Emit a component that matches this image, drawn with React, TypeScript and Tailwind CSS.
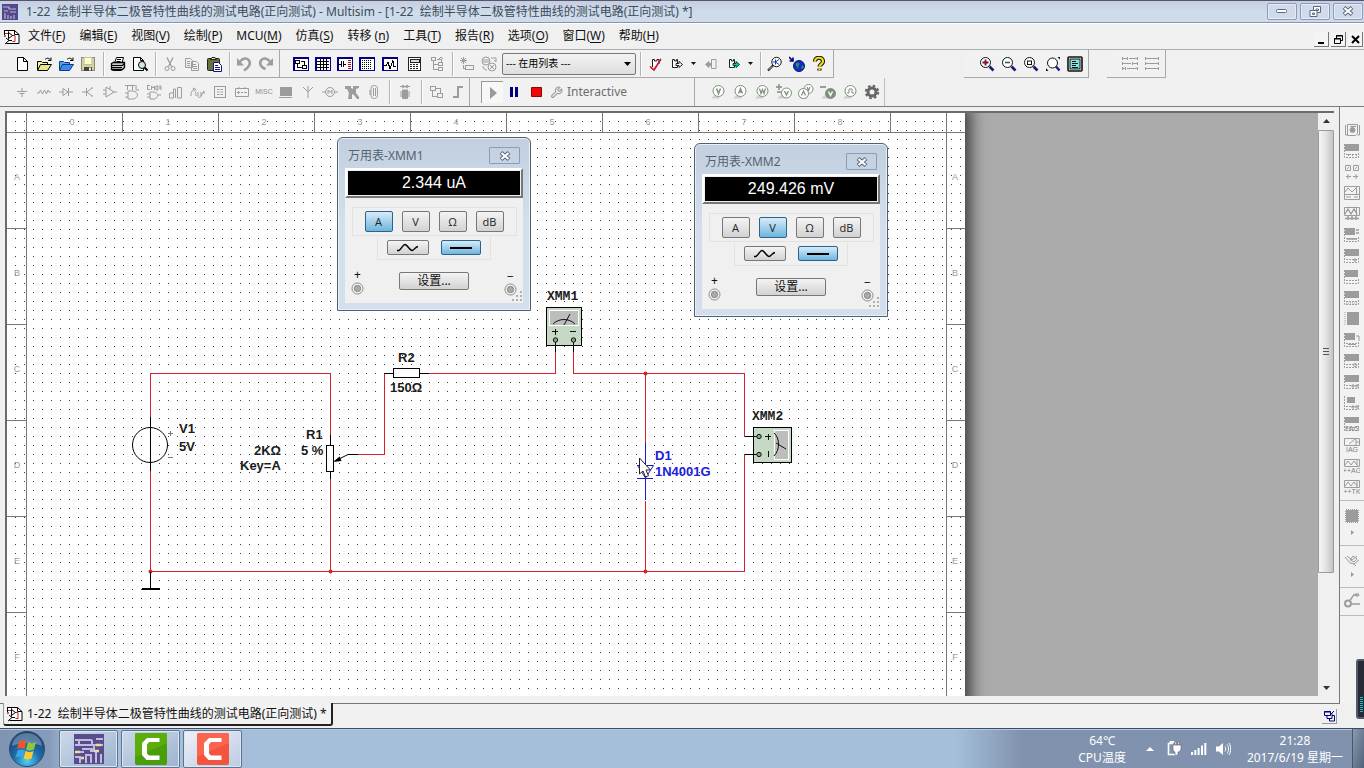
import type { ReactNode } from "react";
import { LuWrench } from "react-icons/lu";

const UI = "font-['Noto_Sans','Noto_Sans_CJK_SC',sans-serif]";

/* ---------- shared pieces ---------- */

function Glyph({ children, crisp = false }: { children: ReactNode; crisp?: boolean }) {
  return (
    <svg
      width="16"
      height="16"
      viewBox="0 0 16 16"
      fill="none"
      stroke="currentColor"
      strokeWidth="1"
      shapeRendering={crisp ? "crispEdges" : "auto"}
      aria-hidden="true"
      className="shrink-0"
    >
      {children}
    </svg>
  );
}

function Tool({ label, children, wide = false, color = "text-black" }: { label: string; children: ReactNode; wide?: boolean; color?: string }) {
  return (
    <button type="button" aria-label={label} className={`flex h-[22px] shrink-0 items-center justify-center ${wide ? "w-6" : "w-[22px]"} ${color}`}>
      {children}
    </button>
  );
}

function Sep() {
  return <div className="mr-[3px] ml-1 h-[24px] w-px shrink-0 bg-[#b4b4b4] shadow-[1px_0_0_#fff]" />;
}

function DropArrow() {
  return (
    <button type="button" aria-label="更多" className="flex h-[22px] w-[11px] shrink-0 items-center justify-center">
      <svg width="5" height="3" viewBox="0 0 5 3" aria-hidden="true"><path d="M0 0h5L2.500 3z" fill="#111" /></svg>
    </button>
  );
}

function DocIcon() {
  return (
    <Glyph>
      <path d="M.500 1.500h10l4.500 4v9H2.500M.500 1v5" stroke="#000" fill="#fff" />
      <path d="M10.500 1.500v4H15" stroke="#000" />
      <path d="M1 4.500h3.500M4.500 2v9M8 6.500h3v6H8.500" stroke="#c81e1e" />
      <path d="M4.500 3.500l4 3-4 3zM2 9l3 2.500L2 14M5 11.500h3M1 6v2M1 15l1.500-1" stroke="#000" />
    </Glyph>
  );
}

/* ---------- toolbar glyphs ---------- */

const mag = (inner: ReactNode) => (
  <Glyph>
    <circle cx="6.500" cy="6.500" r="5" stroke="#111" fill="#fff" />
    <path d="M10.500 10.500l4 4" stroke="#1a1a7a" strokeWidth="2.600" />
    {inner}
  </Glyph>
);

const navy = (inner: ReactNode) => (
  <Glyph crisp>
    <rect x="1" y="2" width="14" height="12" fill="#fff" stroke="#000080" strokeWidth="1" />
    <path d="M0 1h16M0 1v14M15.500 1v14M0 14.500h16" stroke="#000080" />
    {inner}
  </Glyph>
);

const standard = {
  newFile: <Glyph><path d="M3.500 1.500h6l4 4v9h-10zM9.500 1.500v4h4" stroke="#000" fill="#fff" /></Glyph>,
  open: (
    <Glyph>
      <path d="M1.500 14V5.500h4l1 1h5v2" fill="#f5f3a0" stroke="#000" />
      <path d="M1.500 14.500l3-6h11l-4 6z" fill="#e9e58a" stroke="#000" />
      <path d="M9 3.500c2-2 4-1.500 5.500.5M15 1.500v3h-3" stroke="#000" />
    </Glyph>
  ),
  openSample: (
    <Glyph>
      <path d="M1.500 14V5.500h4l1 1h5v2" fill="#5aa0f0" stroke="#123c80" />
      <path d="M1.500 14.500l3-6h11l-4 6z" fill="#3a8cf0" stroke="#123c80" />
      <path d="M9 3.500c2-2 4-1.500 5.500.5M15 1.500v3h-3" stroke="#000" />
    </Glyph>
  ),
  save: (
    <Glyph>
      <rect x="1.500" y="1.500" width="13" height="13" fill="#d8d48c" stroke="#888" />
      <rect x="4" y="1.500" width="8" height="7" fill="#fdfdc8" stroke="#bbb" />
      <path d="M4 11h8v4H4z" fill="#444" stroke="none" />
      <path d="M9 11.500h2v3H9z" fill="#eee" stroke="none" />
    </Glyph>
  ),
  print: (
    <Glyph>
      <path d="M4.500 7l2-5.500h7L12 7" fill="#fff" stroke="#000" />
      <path d="M7 3.500h4M6.500 5.500h4" stroke="#000" />
      <path d="M1.500 7.500l2-1h11v5l-2 2h-11z" fill="#c8c8c8" stroke="#000" strokeWidth="1.300" />
      <path d="M1.500 9.500h11l2-2M2 11.500h10M3 13.500v1h8v-1" stroke="#000" strokeWidth="1.200" />
    </Glyph>
  ),
  preview: (
    <Glyph>
      <path d="M1.500 1.500h7l3 3v10h-10zM8.500 1.500v3h3" fill="#fff" stroke="#000" />
      <circle cx="10" cy="9" r="3.500" fill="#cfe6ea" stroke="#000" />
      <path d="M12.500 11.500l3 3" stroke="#000" strokeWidth="2" />
    </Glyph>
  ),
  cut: (
    <Glyph>
      <path d="M5 1.500l4.500 9M11 1.500l-4.500 9" strokeWidth="1.300" />
      <circle cx="5" cy="12.500" r="2" /><circle cx="11" cy="12.500" r="2" />
    </Glyph>
  ),
  copy: (
    <Glyph>
      <path d="M1.500 2.500h5l2 2v7h-7zM7.500 5.500h5l2 2v7h-7z" fill="#f0f0f0" />
      <path d="M3 5.500h3M3 7.500h3M3 9.500h3M9 8.500h3M9 10.500h4M9 12.500h4" />
    </Glyph>
  ),
  paste: (
    <Glyph>
      <rect x="1.500" y="2.500" width="12" height="12" rx="1" fill="#6b7040" stroke="#222" />
      <path d="M4.500 3.500l1.500-2h3l1.500 2z" fill="#e9e58a" stroke="#222" />
      <path d="M7.500 6.500h5l3 3v6h-8z" fill="#fff" stroke="#16167a" />
      <path d="M9 9.500h3M9 11.500h5M9 13.500h5" stroke="#16167a" />
    </Glyph>
  ),
  undo: (
    <Glyph>
      <path d="M4 5.500C7 2 11 1.500 13 4.500c2 3 0 7-5 10" strokeWidth="2.600" />
      <path d="M1 2v7.500h7z" fill="currentColor" stroke="none" />
    </Glyph>
  ),
  redo: (
    <Glyph>
      <path d="M12 5.500C9 2 5 1.500 3 4.500c-2 3 0 7 4.500 8.500" strokeWidth="2.600" />
      <path d="M15 2v7.500H8z" fill="currentColor" stroke="none" />
    </Glyph>
  ),
};

const views = {
  hierarchy: navy(<path d="M2.500 4.500h4v3h-4zM9.500 9.500h4v3h-4zM4.500 8v3.500h5M8 5.500h3v3" stroke="#000" />),
  sheet: navy(<path d="M2 5.500h12M2 8.500h12M2 11.500h12M5.500 3v11M8.500 3v11M11.500 3v11" stroke="#000" />),
  database: navy(
    <>
      <path d="M2 8.500h2M4.500 5v6M6.500 5v6M7 8.500h2" stroke="#000" />
      <path d="M11 4.500h3M11 6.500h3M11 8.500h3M11 10.500h3M11 12.500h3" stroke="#c00020" />
    </>,
  ),
  breadboard: navy(<path d="M3 4.500h10M3 6.500h10M3 8.500h10M3 10.500h10M3 12.500h10" stroke="#000" strokeDasharray="1 1" />),
  grapher: navy(<path d="M2 9.500h2l2-3 2 6 3-8v6h3" stroke="#000" />),
  post: (
    <Glyph crisp>
      <path d="M2.500 1.500h12v13h-12z" fill="#fff" stroke="#222" />
      <path d="M4 3h9v3H4z" stroke="#222" fill="#ddd" />
      <path d="M4 8.500h9M4 10.500h9M4 12.500h9" stroke="#222" strokeDasharray="2 1" />
    </Glyph>
  ),
  parent: <Glyph crisp><path d="M2.500 1.500h4v3h-4zM9.500 6.500h4v3h-4zM9.500 11.500h4v3h-4zM4.500 5v8.500h5M5 8.500h4M8 3.500h4v3M10 3l2-2 2 2" /></Glyph>,
  create: <Glyph crisp><path d="M4.500 1v7M1 4.500h7M2 2l5 5M7 2L2 7M6.500 9.500h8v4h-8zM4.500 9v3h2" /></Glyph>,
  wizard: (
    <Glyph>
      <circle cx="5" cy="5" r="4" /><path d="M2 4h6M2 6h6M10 2h5v4M13 4l2 2" />
      <circle cx="11" cy="11" r="4" fill="#f0f0f0" /><path d="M9 9l4 4M13 9l-4 4M2 10c0 3 2 4 4 4" />
    </Glyph>
  ),
};

const transfer = {
  erc: (
    <Glyph>
      <path d="M5.500 11V3.500h2v1.500h2.500V3.500h2V8" stroke="#222" fill="#fff" />
      <path d="M3 10.500l4 3.500 7-11" stroke="#c81432" strokeWidth="1.600" />
    </Glyph>
  ),
  forward: (
    <Glyph>
      <path d="M3.500 3.500h2v1.500h2V3.500h1v8h-5z" stroke="#222" fill="#fff" />
      <path d="M7 7.500h3V5.500l3.500 3-3.500 3v-2H7z" stroke="#222" fill="#fff" />
    </Glyph>
  ),
  back: (
    <Glyph>
      <path d="M8.500 3.500h4.500v9H8.500z" />
      <path d="M9 7.500H6V5.500L2.500 8.500l3.500 3v-2h3" fill="currentColor" />
    </Glyph>
  ),
  forwardGreen: (
    <Glyph>
      <path d="M3.500 3.500h2v1.500h2V3.500h1v8h-5z" stroke="#222" fill="#fff" />
      <path d="M7 7.500h3V5.500l3.500 3-3.500 3v-2H7z" stroke="#044" fill="#0ca" />
    </Glyph>
  ),
  find: (
    <Glyph>
      <circle cx="9.500" cy="6" r="4.700" fill="#fff" stroke="#111" />
      <path d="M6 9.500L1 14.500" stroke="#111" strokeWidth="2.200" />
      <path d="M5.300 10.200L1.700 13.800" stroke="#fff" strokeWidth=".8" />
      <path d="M8.500 3.500v5M8.500 6l3.500-2.500M8.500 6l3.500 2.500M6 6h2" stroke="#1a3ab0" />
    </Glyph>
  ),
  web: (
    <Glyph>
      <circle cx="10" cy="10" r="5.500" fill="#1428c8" stroke="#0a1480" />
      <path d="M6.500 8c2-2 4-1 4 0s-2 2-1 4-2 0-3-4zM12 11l2-2 1 2-2 2z" fill="#1d9a4a" stroke="none" />
      <path d="M0 1l4 4M4 1.500V5H.5" stroke="#000080" strokeWidth="1.600" />
    </Glyph>
  ),
  help: (
    <Glyph>
      <path d="M4 5.500c0-5 8-5 8 0 0 2.500-3.500 3-3.500 5M8.500 12.500v2" stroke="#111" strokeWidth="4.200" />
      <path d="M4 5.500c0-5 8-5 8 0 0 2.500-3.500 3-3.500 5M8.500 12.500v1.800" stroke="#f5e000" strokeWidth="2.200" />
    </Glyph>
  ),
};

const zooms = {
  in: mag(<path d="M3.500 6.500h6M6.500 3.500v6" stroke="#7a1030" strokeWidth="1.800" />),
  out: mag(<path d="M4 6.500h5" stroke="#2a6a4a" strokeWidth="1.600" />),
  area: mag(<rect x="4.500" y="5" width="4" height="3.500" stroke="#111" />),
  fit: (
    <Glyph>
      <circle cx="7.500" cy="7" r="5" fill="#fff" stroke="#111" />
      <path d="M11 10.500l3.500 4" stroke="#1a1a7a" strokeWidth="2.400" />
      <path d="M12.500 1H15v2.500zM1 12v3h2.500z" fill="#111" stroke="none" />
    </Glyph>
  ),
  full: (
    <Glyph>
      <rect x="1" y="1" width="14" height="14" rx="1" fill="#fff" stroke="#111" strokeWidth="1.600" />
      <rect x="3" y="3" width="10" height="10" fill="#7fe6e6" stroke="#111" />
      <path d="M5 5.500h4M5 7.500h6M5 9.500h4M5 11.500h6" stroke="#111" />
    </Glyph>
  ),
};

const parts: [string, ReactNode][] = [
  ["电源", <path d="M8 4v3.500M3 7.500h10M5.500 9.500h5M8 10v3" />],
  ["基本", <path d="M1 9h2l1.500-3 2 4 2-4 2 4 1.500-4 1 2h2" />],
  ["二极管", <path d="M1 8h4M5 4.500v7L10 8zM10.500 4v8M11 8h4" />],
  ["晶体管", <path d="M2 8h4M6.500 4v8M7 8l5-4M7 8l5 4M12 3v2M12 11v2" />],
  ["模拟", <path d="M4 3v10l8-5zM1 6h3M1 10h3M12 8h3M8 2v3" />],
  ["TTL", <path d="M1 1.500h5M3.500 2v4M6 1.500h5M8.500 2v4M12 1v5h3M4 7h5c6 1 6 7 0 8H4zM1 9h3M1 13h3" />],
  ["CMOS", <path d="M1 1.500h3M1.500 2v3.500H4M5.500 6V2l1.500 2 1.500-2v4M10 2h2v4h-2zM13 2h2v2h-2M15 4v2M4 8h4c5 1 5 6 0 7H4zM1 10h3M1 13h3M12 11h3" />],
  ["数字", <path d="M1.500 9v5h4V5M5.500 5h2v9M9.500 14V3.500h4V14h-4M5 9H2" />],
  ["混合", <path d="M1 12c0-8 5-8 5 0M3.500 6V4l3 2M8 8v4c0 2 3 2 3 0V8M11 12l3-5v3" />],
  ["指示器", <><rect x="2.500" y="2.500" width="11" height="11" /><path d="M5 5.500h6M5 8h6M5 10.500h6" strokeDasharray="2.500 1" /></>],
  ["功率", <path d="M1.500 4.500h13v8h-13zM3 8.500h3M10 8.500h3M4.500 7v3M5 3v2M11 3v2M7 8.500h2" />],
];

const parts2: [string, ReactNode][] = [
  ["高级外设", <><rect x="2" y="3" width="12" height="9" fill="currentColor" stroke="none" /><path d="M1 13.500h13M3 10l2-3M8 10h4" /></>],
  ["射频", <path d="M3 3l5 5 5-5M8 2v12" />],
  ["机电", <><circle cx="8" cy="8" r="4.500" /><path d="M0 8h3.500M12.500 8H16M6 10V6l2 2.500L10 6v4" /></>],
  ["NI", <path d="M1 2h6v2l2 1V2h6v2l-3 1v4l3 4v2h-2l-3-4-2-1v5H4l1-6-2-4H1z" fill="currentColor" stroke="none" />],
  ["连接器", <><rect x="5" y="1.500" width="6.500" height="13" rx="3" /><path d="M7.500 4v8M9.500 4v8M4 6v5" /></>],
];

const probes: [string, ReactNode][] = [
  ["电压", <><circle cx="8.500" cy="7" r="5.500" fill="#fff" /><path d="M6.500 4.500l2 5 2-5" strokeWidth="1.500" /></>],
  ["电流", <><circle cx="8.500" cy="7" r="5.500" fill="#fff" /><path d="M6.500 9.500l2-5 2 5M7.500 8h2" strokeWidth="1.300" /></>],
  ["功率", <><circle cx="8.500" cy="7" r="5.500" fill="#fff" /><path d="M5.500 4.500l1.500 5 1.500-4 1.500 4 1.500-5" strokeWidth="1.200" /></>],
  ["差分电压", <><circle cx="10.500" cy="9" r="5" fill="#fff" /><path d="M8.500 7l2 4 2-4M0 3h6M3 0v6M1 8h4" strokeWidth="1.400" /></>],
  ["电压电流", <><circle cx="10.500" cy="5" r="4.500" fill="#fff" /><circle cx="5.500" cy="9.500" r="5" fill="#fff" /><path d="M3.500 11.500l2-4.500 2 4.500M9 3l1.500 3.500L12 3" strokeWidth="1.200" /></>],
  ["参考电压", <><circle cx="10.500" cy="9.500" r="5" fill="currentColor" /><path d="M8.500 7.500l2 4 2-4" stroke="#fff" strokeWidth="1.400" /><path d="M0 3h6" strokeWidth="1.600" /></>],
  ["数字", <><circle cx="8.500" cy="7" r="5.500" fill="#fff" /><path d="M5 9h2V5h3v4h2" /></>],
];

/* ---------- header ---------- */

function TitleBar() {
  const btn = "flex h-[17px] w-[30px] items-center justify-center rounded-[2px] border border-[#8d9bb8] bg-[#cfdaea] shadow-[inset_0_0_0_1px_#e4ebf5] text-[#5a6a80]";
  return (
    <header className="flex h-[24px] shrink-0 items-center border-t border-b border-t-[#55566c] border-b-white bg-gradient-to-b from-[#c6cee2] via-[#cddde9] to-[#cfdaee] pr-px pl-[2px] shadow-[inset_0_-1px_0_#8797a8]">
      <svg width="16" height="16" viewBox="0 0 16 16" aria-hidden="true">
        <rect width="16" height="16" fill="#544888" />
        <path d="M1 3h6v2h7M2 7h4M8 8h6M3 15V9M6 15v-4M9 15v-3M12 15v-4" stroke="#b9b4dc" strokeWidth="1.200" fill="none" />
      </svg>
      <h1 className="ml-2 flex-1 truncate text-[12px] whitespace-pre text-[#3f4a5a]">
        {"1-22  绘制半导体二极管特性曲线的测试电路(正向测试) - Multisim - [1-22  绘制半导体二极管特性曲线的测试电路(正向测试) *]"}
      </h1>
      <div className="flex gap-[3px] pb-[2px]">
        <button type="button" aria-label="最小化" className={btn}><svg width="12" height="6" viewBox="0 0 12 6" aria-hidden="true"><rect x=".5" y="1.500" width="10" height="3" rx="1" fill="#fff" stroke="#5a6a80" /></svg></button>
        <button type="button" aria-label="还原" className={btn}><svg width="13" height="11" viewBox="0 0 13 11" aria-hidden="true"><path d="M4.500.5h7v6h-7zM7 3h2.500v1.500H7z" fill="#fff" stroke="#5a6a80" /><path d="M1 4.500h7v6H1zM3.500 7h2v1.500h-2z" fill="#fff" stroke="#5a6a80" /></svg></button>
        <button type="button" aria-label="关闭" className={btn}><CloseX /></button>
      </div>
    </header>
  );
}

function CloseX() {
  return (
    <svg width="12" height="10" viewBox="0 0 12 10" aria-hidden="true">
      <path d="M2 1.500l8 7M10 1.500l-8 7" stroke="#55657c" strokeWidth="4" />
      <path d="M2.500 2l7 6M9.500 2l-7 6" stroke="#fff" strokeWidth="2.200" />
    </svg>
  );
}

const menus: [string, string, string][] = [
  ["文件(", "F", ")"], ["编辑(", "E", ")"], ["视图(", "V", ")"], ["绘制(", "P", ")"], ["MCU(", "M", ")"], ["仿真(", "S", ")"],
  ["转移 (", "n", ")"], ["工具(", "T", ")"], ["报告(", "R", ")"], ["选项(", "O", ")"], ["窗口(", "W", ")"], ["帮助(", "H", ")"],
];

function MenuBar() {
  const mdi = "flex h-[15px] w-[15px] items-center justify-center border-r border-b border-[#777] bg-[#f4f4f4]";
  return (
    <nav className="flex h-[26px] shrink-0 items-center border-b border-[#a8adb8] bg-[#f0f0f0] pr-px pl-1">
      <DocIcon />
      <div className="ml-[2px] flex flex-1 gap-[2px] pb-px">
        {menus.map(([a, k, b]) => (
          <button key={a} type="button" className="px-[6px] text-[12px] whitespace-pre text-[#111]">
            {a}<span className="underline underline-offset-2">{k}</span>{b}
          </button>
        ))}
      </div>
      <div className="flex gap-[2px] self-end pb-[2px]">
        <button type="button" aria-label="最小化文档" className={mdi}><svg width="9" height="9" aria-hidden="true"><path d="M1 8h6" stroke="#000" strokeWidth="2" /></svg></button>
        <button type="button" aria-label="还原文档" className={mdi}><svg width="9" height="9" aria-hidden="true"><path d="M2.500 3V.5h6v5H6M2 1h7M.5 3.500h6v5h-6zM0 4h7" stroke="#000" fill="none" /></svg></button>
        <button type="button" aria-label="关闭文档" className={mdi}><svg width="9" height="9" aria-hidden="true"><path d="M1 1l7 7M8 1L1 8" stroke="#000" strokeWidth="2" /></svg></button>
      </div>
    </nav>
  );
}

const bar = "flex h-[28px] shrink-0 items-center border-r border-b border-[#a9a9a9] bg-[#f1f1f1]";
const gray = "text-[#9c9c9c]";

function ToolRowOne() {
  return (
    <div className="flex h-[28px] shrink-0 bg-[#f0f0f0]">
      <div className={`${bar} w-[280px] pl-[11px]`} role="toolbar" aria-label="标准">
        <Tool label="新建">{standard.newFile}</Tool>
        <Tool label="打开">{standard.open}</Tool>
        <Tool label="打开样本">{standard.openSample}</Tool>
        <Tool label="保存">{standard.save}</Tool>
        <Sep />
        <Tool label="打印">{standard.print}</Tool>
        <Tool label="打印预览">{standard.preview}</Tool>
        <Sep />
        <Tool label="剪切" color={gray}>{standard.cut}</Tool>
        <Tool label="复制" color={gray}>{standard.copy}</Tool>
        <Tool label="粘贴">{standard.paste}</Tool>
        <Sep />
        <Tool label="撤消" color={gray}>{standard.undo}</Tool>
        <Tool label="重做" color={gray}>{standard.redo}</Tool>
      </div>
      <div className={`${bar} w-[554px] pl-[10px]`} role="toolbar" aria-label="主要">
        <Tool label="设计工具箱">{views.hierarchy}</Tool>
        <Tool label="电子表格视图">{views.sheet}</Tool>
        <Tool label="数据库管理器">{views.database}</Tool>
        <Tool label="面包板">{views.breadboard}</Tool>
        <Tool label="图示仪" wide>{views.grapher}</Tool>
        <Tool label="后处理器" wide>{views.post}</Tool>
        <Tool label="母电路图" color={gray}>{views.parent}</Tool>
        <Sep />
        <Tool label="元器件向导" color={gray}>{views.create}</Tool>
        <Tool label="创建元器件" color={gray}>{views.wizard}</Tool>
        <select aria-label="在用列表" className="ml-[2px] h-[22px] w-[134px] appearance-none rounded-[2px] border border-[#777] bg-[#ececec] bg-[linear-gradient(#f3f3f3,#dedede)] px-[3px] font-['Open_Sans','Noto_Sans_CJK_SC',sans-serif] text-[10px] text-black">
          <option>--- 在用列表 ---</option>
        </select>
        <svg width="7" height="4" viewBox="0 0 7 4" className="pointer-events-none -ml-3 mr-[5px] shrink-0" aria-hidden="true"><path d="M0 0h7L3.500 4z" fill="#000" /></svg>
        <Sep />
        <Tool label="电气规则查验">{transfer.erc}</Tool>
        <Tool label="转移到布局">{transfer.forward}</Tool>
        <DropArrow />
        <Tool label="反向注解" wide color={gray}>{transfer.back}</Tool>
        <Tool label="正向注解">{transfer.forwardGreen}</Tool>
        <DropArrow />
        <Sep />
        <Tool label="查找范例">{transfer.find}</Tool>
        <Tool label="教育网站">{transfer.web}</Tool>
        <Tool label="帮助">{transfer.help}</Tool>
      </div>
      <div className={`${bar} ml-[130px] w-[125px] pl-3`} role="toolbar" aria-label="缩放">
        <Tool label="放大">{zooms.in}</Tool>
        <Tool label="缩小">{zooms.out}</Tool>
        <Tool label="缩放区域">{zooms.area}</Tool>
        <Tool label="缩放页面">{zooms.fit}</Tool>
        <Tool label="全屏">{zooms.full}</Tool>
      </div>
      <div className={`${bar} ml-[18px] w-[59px] pl-3`} role="toolbar" aria-label="梯形图">
        <Tool label="梯级" color={gray}><Glyph crisp><path d="M.500 1v3M.500 6v3M.500 11v3M15.500 1v3M15.500 6v3M15.500 11v3M0 2.500h5M7 2.500h9M0 7.500h9M11 7.500h5M0 12.500h3M5 12.500h11M5.500 1v3M10.500 6v3M3.500 11v3" /></Glyph></Tool>
        <Tool label="横档" color={gray}><Glyph crisp><path d="M1 2.500h14M1 7.500h14M1 12.500h14M1.500 1v3M1.500 6v3M1.500 11v3M14.500 1v3M14.500 6v3M14.500 11v3" /></Glyph></Tool>
      </div>
    </div>
  );
}

function ToolRowTwo() {
  return (
    <div className="flex h-[28px] shrink-0 bg-[#f0f0f0]">
      <div className="flex w-[470px] shrink-0 items-center border-r border-[#a9a9a9] bg-[#f1f1f1] pl-[11px]" role="toolbar" aria-label="元器件">
        {parts.map(([n, g]) => <Tool key={n} label={n} color={gray}><Glyph>{g}</Glyph></Tool>)}
        <button type="button" className="w-[22px] font-['Liberation_Sans',sans-serif] text-[7px] text-[#8a8a8a]">MISC</button>
        {parts2.map(([n, g]) => <Tool key={n} label={n} color={gray}><Glyph>{g}</Glyph></Tool>)}
        <Sep />
        <Tool label="MCU" wide color={gray}><Glyph><path d="M3 2.500h10M5 1l6 3M11 1L5 4" /><path d="M5.500 6h5v8.500h-5zM3 8h2M3 10h2M3 12h2M11 8h2M11 10h2M11 12h2" fill="currentColor" /></Glyph></Tool>
        <Sep />
        <Tool label="层次块" color={gray}><Glyph crisp><path d="M2.500 2.500h5v4h-5zM9.500 9.500h5v4h-5zM4.500 7v5h5M8 4.500h4v4" /></Glyph></Tool>
        <Tool label="总线" color={gray}><Glyph crisp><path d="M3 13h5V3h5" strokeWidth="2" /></Glyph></Tool>
      </div>
      <div className="flex w-[225px] shrink-0 items-center border-r border-[#a9a9a9] bg-[#f1f1f1] pl-[11px]" role="toolbar" aria-label="仿真">
        <button type="button" aria-label="运行" className="flex h-[22px] w-[22px] items-center justify-center border-t border-l border-[#999] bg-[#f7f7f7]"><svg width="8" height="12" aria-hidden="true"><path d="M1 0l7 6-7 6z" fill="#9a9a9a" /></svg></button>
        <Tool label="暂停"><svg width="8" height="10" aria-hidden="true"><path d="M0 0h3v10H0zM5 0h3v10H5z" fill="#000080" /></svg></Tool>
        <Tool label="停止"><svg width="11" height="10" aria-hidden="true"><path d="M.5.5h10v9H.5z" fill="#f00808" stroke="#900" /></svg></Tool>
        <button type="button" className="ml-[3px] flex items-center gap-1 text-[12px] text-[#6d6d6d]"><LuWrench size={13} className="text-[#999]" />Interactive</button>
      </div>
      <div className="flex w-[190px] shrink-0 items-center border-r border-[#bdbdbd] bg-[#f1f1f1] pl-3" role="toolbar" aria-label="探针">
        {probes.map(([n, g]) => <Tool key={n} label={n} color="text-[#7f8f7c]"><Glyph><path d="M1 14.500h9l-3-3H4z" fill="#cfcfcf" stroke="none" />{g}</Glyph></Tool>)}
        <Tool label="探针设置" color="text-[#666]"><Glyph><circle cx="8" cy="8" r="4" strokeWidth="3" /><circle cx="8" cy="8" r="6.200" strokeWidth="2" strokeDasharray="2.600 2.270" /></Glyph></Tool>
      </div>
    </div>
  );
}

/* ---------- schematic ---------- */

const cols = ["0", "1", "2", "3", "4", "5", "6", "7", "8"];
const rows = ["A", "B", "C", "D", "E", "F"];

function Schematic() {
  return (
    <svg width="958" height="680" viewBox="7 113 958 680" className="block bg-white" role="img" aria-label="测试电路" fill="none">
      <defs>
        <pattern id="dots" x="6" y="4" width="9" height="9" patternUnits="userSpaceOnUse">
          <rect width="1" height="1" fill="#3a3a3a" />
        </pattern>
      </defs>
      <rect x="7" y="113" width="958" height="680" fill="url(#dots)" />
      <g shapeRendering="crispEdges" stroke="#777">
        <path d="M26.500 113v680M946.500 113v680M7 132.500h958" />
        {cols.map((c, i) => <path key={c} d={`M${122.500 + i * 96} 113v19`} />)}
        {rows.map((r, i) => <path key={r} d={`M7 ${228.500 + i * 96}h19M946 ${228.500 + i * 96}h19`} />)}
      </g>
      <g className="font-['Liberation_Sans',sans-serif] text-[9px]" fill="#999" textAnchor="middle">
        {cols.map((c, i) => <text key={c} x={72 + i * 96} y="125">{c}</text>)}
        {rows.map((r, i) => <text key={r} x="17" y={180 + i * 96}>{r}</text>)}
        {rows.map((r, i) => <text key={r} x="955" y={180 + i * 96}>{r}</text>)}
      </g>

      <g shapeRendering="crispEdges" stroke="#d8202a">
        <path d="M150.500 417V373.500H330.500V435M150.500 471V571.500H744.500V454.500M330.500 479V571M358 454.500H384.500V373.500M429 373.500H555.500V352M573.500 352V373.500H744.500V436.500" />
        <path d="M645.500 373.500V443.500" />
        <path d="M645.500 500.500V571.500" />
      </g>
      <g fill="#d8202a">
        <circle cx="150.500" cy="571.500" r="2" /><circle cx="330.500" cy="571.500" r="2" />
        <circle cx="645.500" cy="571.500" r="2" /><circle cx="645.500" cy="373.500" r="2" />
      </g>
      <g shapeRendering="crispEdges" stroke="#000">
        <path d="M150.500 417V471M150.500 572V588M330.500 435V445M330.500 471V479M384 373.500H393M419 373.500H429M348 454.500H358M555.500 346V352M573.500 346V352M745 436.500H757M745 454.500H757" />
        <path d="M326.500 445.500h7v26h-7zM393.500 368.500h26v9h-26z" fill="#fff" />
        <path d="M142 589h18" strokeWidth="2" />
      </g>
      <circle cx="150" cy="445" r="17.500" stroke="#000" />
      <path d="M348 454.500L339 459" stroke="#000" />
      <path d="M333 462l6.500-5.500 2 4.500z" fill="#000" />
      <path d="M168 433.500h5M170.500 431v5M168 457.500h5" stroke="#777" shapeRendering="crispEdges" />

      <g stroke="#1c1cc4">
        <path d="M645.500 443V500M637 478.500h16M637 465.500h16" shapeRendering="crispEdges" />
        <path d="M637.500 465.500h16l-8 12.500z" />
      </g>

      <g className="font-['Liberation_Sans',sans-serif] text-[13px] font-bold" fill="#1c1c1c">
        <text x="179" y="433">V1</text><text x="179" y="451">5V</text>
        <text x="398" y="362">R2</text><text x="390" y="392">150Ω</text>
        <text x="306" y="439">R1</text><text x="301" y="455">5 %</text>
        <text x="254" y="455">2KΩ</text><text x="240" y="470">Key=A</text>
        <text x="655" y="460" fill="#2020dc">D1</text><text x="655" y="476" fill="#2020dc">1N4001G</text>
      </g>
      <g className="font-['Liberation_Mono',monospace] text-[13px] font-bold" fill="#1c1c1c">
        <text x="547" y="300">XMM1</text><text x="752" y="420">XMM2</text>
      </g>

      <g shapeRendering="crispEdges">
        <rect x="546.500" y="307.500" width="35" height="38" fill="#c6d9c5" stroke="#000" />
        <rect x="549.500" y="310.500" width="29" height="15" fill="#bdbdbd" stroke="#fff" />
        <path d="M552 331.500h6M555.500 329v6M570 331.500h6M555.500 341v5M573.500 341v5" stroke="#111" />
        <rect x="753.500" y="427.500" width="38" height="35" fill="#c6d9c5" stroke="#000" />
        <rect x="774.500" y="430.500" width="14" height="29" fill="#bdbdbd" stroke="#fff" />
        <path d="M765 436.500h6M768.500 434v6M768.500 451v6M754 436.500h5M754 454.500h5" stroke="#111" />
      </g>
      <g stroke="#111">
        <path d="M553 324c6-6 16-6 22 0M564 325l6-11M774 433c6 5 6 17 0 23M776 443l10 6" />
        <g fill="#8ca08c">
          <circle cx="555.500" cy="340" r="2.200" /><circle cx="573.500" cy="340" r="2.200" />
          <circle cx="759" cy="436.500" r="2.200" /><circle cx="759" cy="454.500" r="2.200" />
        </g>
      </g>
      <path d="M639.500 458v16l3.500-3 2.500 6 3-1.200-2.500-5.800h4.500z" fill="#fff" stroke="#222" />
    </svg>
  );
}

function Terminal() {
  return (
    <svg width="13" height="13" viewBox="0 0 13 13" aria-hidden="true">
      <circle cx="6.500" cy="6.500" r="5.500" fill="#f6f6f6" stroke="#888" />
      <circle cx="6.500" cy="6.500" r="3.200" fill="#aaa" stroke="#888" />
    </svg>
  );
}

function Multimeter({ name, value, active, place }: { name: string; value: string; active: string; place: string }) {
  const off = "border-[#777] bg-gradient-to-b from-[#f4f4f4] to-[#d2d2d2]";
  const on = "border-[#2c628b] bg-gradient-to-b from-[#d5ecf9] to-[#6eb5dd]";
  return (
    <section aria-label={`万用表-${name}`} className={`absolute ${place} flex h-[174px] w-[194px] flex-col rounded-t-[6px] border border-[#51606f] bg-gradient-to-b from-[#c2cfdf] via-[#d3dfec] to-[#d3dfec] px-[7px] pb-[7px] shadow-[inset_0_0_0_1px_#e9f0f7]`}>
      <div className="flex h-[30px] shrink-0 items-center justify-between px-[3px] pt-[5px]">
        <h2 className="text-[12px] text-[#56616e]">万用表-{name}</h2>
        <button type="button" aria-label="关闭" className="flex h-[17px] w-[31px] items-center justify-center rounded-[1px] border border-[#8d9bb8]"><CloseX /></button>
      </div>
      <div className="flex flex-1 flex-col items-center bg-[#f0f0f0]">
        <output className="flex h-[30px] w-full shrink-0 items-center justify-center border-2 border-t-[#fff] border-r-[#777] border-b-[#777] border-l-[#fff] bg-black font-['Liberation_Sans',sans-serif] text-[16px] text-white shadow-[inset_0_0_0_1px_#f0f0f0]">{value}</output>
        <div className="mt-[9px] flex gap-[9px] border border-[#e2e2e2] px-3 py-[3px]">
          {["A", "V", "Ω", "dB"].map((m) => (
            <button key={m} type="button" aria-pressed={m === active} className={`h-[21px] w-[28px] rounded-[2px] border font-['Open_Sans','Noto_Sans',sans-serif] text-[11px] leading-none text-[#222] ${m === active ? on : off}`}>{m}</button>
          ))}
        </div>
        <div className="mt-px flex gap-3 border-r border-b border-l border-[#e2e2e2] px-[9px] pt-[3px] pb-1">
          <button type="button" aria-label="交流" aria-pressed="false" className={`flex h-[15px] w-[42px] items-center justify-center rounded-[2px] border ${off}`}>
            <svg width="24" height="9" aria-hidden="true"><path d="M1 7.500h2C6 5 7 1.500 9 1.500S14 7.500 16 7.500 19 4 22 3.500" stroke="#000" strokeWidth="1.400" fill="none" /></svg>
          </button>
          <button type="button" aria-label="直流" aria-pressed="true" className={`flex h-[15px] w-[40px] items-center justify-center rounded-[2px] border ${on}`}>
            <span className="h-[2px] w-[22px] bg-black" />
          </button>
        </div>
        <div className="flex w-full flex-1 justify-between px-[6px] text-[#111]">
          <div className="flex flex-col items-center gap-[2px] pt-[10px]">
            <span className="text-[12px] leading-[10px]">+</span><Terminal />
          </div>
          <button type="button" className={`mt-[12px] h-[18px] w-[70px] rounded-[2px] border text-[12px] leading-none ${off}`}>设置...</button>
          <div className="flex flex-col items-center gap-[2px] pt-[12px]">
            <span className="text-[12px] leading-[9px]">−</span><Terminal />
          </div>
        </div>
      </div>
      <svg width="11" height="11" className="absolute right-[7px] bottom-[8px]" aria-hidden="true">
        <path d="M8 0h2v2H8zM4 4h2v2H4zM8 4h2v2H8zM0 8h2v2H0zM4 8h2v2H4zM8 8h2v2H8z" fill="#b0b0b0" />
      </svg>
    </section>
  );
}

function ScrollBar() {
  return (
    <div className="flex w-[16px] shrink-0 flex-col items-center bg-[#f0f0f0]" aria-hidden="true">
      <svg width="7" height="17" className="shrink-0"><path d="M0 10h7L3.500 6z" fill="#333" /></svg>
      <div className="flex w-full flex-[442] items-center justify-center rounded-[1px] border border-[#9a9a9a] bg-gradient-to-r from-[#f6f6f6] via-[#e2e2e2] to-[#c4c4c4]">
        <svg width="7" height="8"><path d="M0 .5h6M0 3.500h6M0 6.500h6" stroke="#555" /></svg>
      </div>
      <div className="flex-[106]" />
      <svg width="7" height="17" className="shrink-0"><path d="M0 7h7L3.500 11z" fill="#333" /></svg>
    </div>
  );
}

/* ---------- instrument palette ---------- */

const solid = (w = 15) => <path d={`M1 1h${w - 1}v7H1z`} fill="currentColor" stroke="none" />;
const foot = <path d="M.500 1v13.500h14V9M2 11.500h11" strokeDasharray="2 1" />;
const tagText = (t: string) => <text x="8" y="15" textAnchor="middle" stroke="none" fill="#808080" className="font-['Liberation_Sans',sans-serif] text-[7px]">{t}</text>;

const instruments: [string, ReactNode][] = [
  ["万用表", <><path d="M3.500 2.500h10v9l-2 2h-8z" /><circle cx="8.500" cy="8" r="2.500" fill="currentColor" /><path d="M6 4.500h6M1.500 3v10h2M15.500 3v10h-2" /></>],
  ["函数发生器", <>{solid()}{foot}<path d="M4 12h1M8 12h1M12 12h1" strokeWidth="2" /></>],
  ["瓦特计", <path d="M1.500 1.500h5v5h-5zM9.500 1.500h5v5h-5zM2 12.500h5M9 12.500h5M4 10v5M12 10v5M3 5l2-2M11 5l2-2" />],
  ["示波器", <><path d="M.500 1.500h15v8H.500zM12.500 2v7M.500 9v5.500h15V9" /><path d="M1 7l3-4 4 4 4-4M2 12h5M10 12h4" /></>],
  ["四通道示波器", <><path d="M.500 1.500h15v8H.500zM12.500 2v7" /><path d="M1 8l3-5 3 5 3-5 3 5M1 12.500h14M4 10v4M8 10v4M12 10v4" strokeWidth="1.400" /></>],
  ["波特测试仪", <>{solid(11)}{foot}<path d="M12 3h3M12 6h3M3 12h10" strokeWidth="1.400" /></>],
  ["频率计数器", <>{solid()}{foot}<path d="M11 10v4M9 12h4" /></>],
  ["字发生器", <>{solid(14)}{foot}</>],
  ["逻辑变换器", <>{solid()}{foot}<path d="M2 13h12" strokeDasharray="1 1" /></>],
  ["逻辑分析仪", <><path d="M3 1h12v13H3z" fill="currentColor" stroke="none" /><path d="M1 1v13" strokeDasharray="1 1" /></>],
  ["IV分析仪", <>{solid(11)}{foot}<path d="M12 4h3v5M4 12.500h8" /></>],
  ["失真分析仪", <>{solid()}{foot}<circle cx="11" cy="12" r="1.500" /></>],
  ["光谱分析仪", <>{solid()}{foot}<circle cx="9" cy="12" r="1.200" /><circle cx="13" cy="12" r="1.200" /></>],
  ["网络分析仪", <><path d="M3 2h8v6H3z" fill="currentColor" stroke="none" />{foot}<circle cx="9" cy="12" r="1.200" /><circle cx="13" cy="12" r="1.200" /></>],
  ["安捷伦函数发生器", <><path d="M1 1h14v6H1z" fill="currentColor" stroke="none" />{foot}{tagText("FAG")}</>],
  ["安捷伦万用表", <><path d="M.500 1.500h15v7H.500zM5 7l6-5M12 2v6M12 5h3" />{tagText("IAG")}</>],
  ["安捷伦示波器", <><path d="M.500 1.500h15v7H.500zM1 7l3-4 3 4 3-4 3 4M13 2v6" />{tagText("++AG")}</>],
  ["泰克示波器", <><path d="M.500 1.500h15v7H.500zM1 7l3-4 3 4 3-4 3 4M13 2v6" />{tagText("++TK")}</>],
];

function Palette() {
  return (
    <aside className="relative flex w-[24px] shrink-0 flex-col items-center bg-[#f2f2f2] pt-3 text-[#9c9c9c]" aria-label="仪器">
      {instruments.map(([n, g]) => (
        <button key={n} type="button" aria-label={n} className="flex h-[21px] w-full shrink-0 items-center justify-center"><Glyph>{g}</Glyph></button>
      ))}
      <div className="mt-[3px] h-px w-full bg-[#bbb]" />
      <button type="button" aria-label="LabVIEW 仪器" className="flex flex-col items-center gap-[6px] pt-[7px] pb-[10px]">
        <Glyph><path d="M2 2h12v12H2z" fill="currentColor" strokeDasharray="1 1" strokeWidth="2" /></Glyph>
        <svg width="3" height="5" aria-hidden="true"><path d="M0 0l3 2.500L0 5z" fill="#999" /></svg>
      </button>
      <div className="h-px w-full bg-[#bbb]" />
      <button type="button" aria-label="NI ELVISmx 仪器" className="flex flex-col items-center gap-[4px] pt-[6px] pb-[10px]">
        <Glyph><path d="M1 5l5 6 4 1 5-4M3 4l5 4 5-4M6 8l4 2 3-3-4-3zM10 12l2 2" /></Glyph>
        <svg width="3" height="5" aria-hidden="true"><path d="M0 0l3 2.500L0 5z" fill="#999" /></svg>
      </button>
      <div className="h-px w-full bg-[#bbb]" />
      <button type="button" aria-label="电流探针" className="pt-[4px] pb-[7px]">
        <Glyph><circle cx="4" cy="11.500" r="3" strokeWidth="2" /><path d="M5.500 9l5-7M8 12h8M11 4l1-2 1 2 1-2 1 2" strokeWidth="1.300" /></Glyph>
      </button>
      <div className="h-px w-full bg-[#bbb]" />
      <div className="absolute right-0 bottom-[-15px] z-10 flex h-[60px] w-[8px] flex-col justify-end rounded-l-[3px] border-2 border-r-0 border-[#555b68] bg-[#262b36] pb-1 pl-[2px]">
        <div className="h-[16px] w-[3px] bg-[repeating-linear-gradient(#2fb6c8_0_1px,#16303c_1px_2px)]" />
      </div>
    </aside>
  );
}

/* ---------- footer ---------- */

function SheetTabs() {
  return (
    <div className="flex h-[24px] shrink-0 items-start justify-between bg-[#f0f0f0] pr-[27px] pl-[3px]">
      <button type="button" className="-mt-px flex h-[23px] items-center rounded-b-[3px] border-r-2 border-b-2 border-l border-[#222] border-l-[#999] bg-[#f2f2f2] pr-1 pl-[3px] text-[12px] whitespace-pre text-[#111]">
        <DocIcon /><span className="ml-1">{"1-22  绘制半导体二极管特性曲线的测试电路(正向测试) *"}</span>
      </button>
      <button type="button" aria-label="窗口列表" className="mt-[5px] border-r border-b border-[#999]">
        <svg width="14" height="14" viewBox="0 0 14 14" aria-hidden="true"><path d="M2.500 2.500h6v4h-6zM2 3h7M5 7v2.500h5V4.500H9M7.500 10v2h5V6.500H10M12 2l-2 2" stroke="#000080" fill="none" /></svg>
      </button>
    </div>
  );
}

function TaskButton({ label, children, bright = false }: { label: string; children: ReactNode; bright?: boolean }) {
  return (
    <button type="button" aria-label={label} className={`flex h-[38px] w-[59px] items-center justify-center rounded-[2px] border border-[#5d738f] shadow-[inset_0_0_0_1px_#dce6f2] ${bright ? "bg-gradient-to-br from-[#f0f0f8] to-[#bccbe2]" : "bg-gradient-to-br from-[#cdd9ea] to-[#9db3d0]"}`}>
      {children}
    </button>
  );
}

function CamtasiaLogo() {
  return <path d="M24.500 9V5H12L7 10v12l4.500 5h13v-4.500H14L12 20.500V11.500L14 9z" fill="#fff" />;
}

function TaskBar() {
  return (
    <footer className="flex h-[40px] shrink-0 items-center border-t border-[#3c4c62] bg-[linear-gradient(90deg,#7f94b3_0,#879cba_50px,#a5bfdb_70px,#a5bfdb_70%,#8092ad_75%,#8092ad_100%)] shadow-[inset_0_1px_0_#b9cbe0]">
      <button type="button" aria-label="开始" className="ml-2 shrink-0">
        <svg width="38" height="38" viewBox="0 0 38 38" aria-hidden="true">
          <defs>
            <radialGradient id="orb" cx="50%" cy="85%" r="85%">
              <stop offset="0" stopColor="#4fd0f5" /><stop offset=".45" stopColor="#1c6ca8" /><stop offset="1" stopColor="#1b3c68" />
            </radialGradient>
          </defs>
          <circle cx="19" cy="19" r="17.500" fill="url(#orb)" stroke="#2d4b70" />
          <path d="M4 16C5 7 12 3 19 3s14 4 15 13c-9-4-21-4-30 0z" fill="#fff" opacity=".28" />
          <path d="M11 12c3-2 5-2 7.500-.5l-2 7.500C14 17.500 12 17.500 9 19z" fill="#f0562a" />
          <path d="M20 12c3 1.500 5 1.500 8 0l-2 7.500c-3 1.500-5.500 1-8 0z" fill="#8fc63e" />
          <path d="M9.500 20.500c3-1.500 5-1.500 7.500 0l-2 7c-2.500-1.500-5-1.500-7.500 0z" fill="#3ba3e8" />
          <path d="M17.500 21c3 1.500 5.500 1.500 8 0l-2 7.500c-3 1.500-5.500 1-8 0z" fill="#fcc92f" />
        </svg>
      </button>
      <div className="ml-[13px] flex gap-[3px]">
        <TaskButton label="Multisim">
          <svg width="30" height="30" viewBox="0 0 30 30" fill="none" aria-hidden="true">
            <rect width="30" height="30" fill="#584c8a" />
            <path d="M1 6h17M18 6v5H5V6M1 11h3M8 15h12v-4h9M1 18h9M22 5h7M1 23h5v6M12 29v-8h5v8M22 29V17h-6M27 29v-9" stroke="#c0bbe0" strokeWidth="2" />
            <path d="M22 11h5M1 18h5M20 17h5M7 24h3" stroke="#f0dc9a" strokeWidth="2.500" />
          </svg>
        </TaskButton>
        <TaskButton label="Camtasia">
          <svg width="32" height="32" viewBox="0 0 32 32" aria-hidden="true"><rect width="32" height="32" rx="2" fill="#4a9e0a" /><path d="M0 0h32v10L0 24z" fill="#63b30d" opacity=".7" /><CamtasiaLogo /></svg>
        </TaskButton>
        <TaskButton label="Camtasia Recorder" bright>
          <svg width="32" height="32" viewBox="0 0 32 32" aria-hidden="true"><rect width="32" height="32" rx="2" fill="#f4533c" /><path d="M0 0h32v10L0 24z" fill="#ff7058" opacity=".6" /><CamtasiaLogo /></svg>
        </TaskButton>
      </div>
      <div className="ml-auto flex h-full items-center text-center text-[12px] leading-[17px] text-white">
        <div>64℃<br />CPU温度</div>
        <button type="button" aria-label="显示隐藏的图标" className="ml-5"><svg width="8" height="5" aria-hidden="true"><path d="M0 5l4-4 4 4z" fill="#fff" /></svg></button>
        <svg width="16" height="16" viewBox="0 0 16 16" className="ml-3" aria-hidden="true">
          <path d="M7 2.500H2.500v11h8V11M4.500 2V.800h3V2" stroke="#fff" strokeWidth="1.600" fill="none" />
          <path d="M7 4h8v3c0 3-2 4-3 4v3H9v-3C8 11 7 9 7 7zM9 1h1.500v3H9zM12 1h1.500v3H12z" fill="#fff" stroke="#556" strokeWidth=".5" />
        </svg>
        <svg width="16" height="16" viewBox="0 0 16 16" className="ml-[9px]" aria-hidden="true"><path d="M0 11h2v3H0zM3.300 9h2v5h-2zM6.600 7h2v7h-2zM10 4.500h2V14h-2zM13.300 2h2v12h-2z" fill="#fff" /></svg>
        <svg width="16" height="16" viewBox="0 0 16 16" className="ml-2" aria-hidden="true"><path d="M1 5.500h3L8 2v12l-4-3.500H1z" fill="#fff" /><path d="M10 5.500c1 1.500 1 3.500 0 5M12 3.500c2 2.500 2 6.500 0 9M14 2c2.200 3.500 2.200 8.500 0 12" stroke="#fff" fill="none" /></svg>
        <div className="ml-4">21:28<br />2017/6/19 星期一</div>
        <button type="button" aria-label="显示桌面" className="ml-[9px] h-full w-[12px] border-l border-[#47566c] bg-gradient-to-br from-[#8b9bb0] to-[#50617a]" />
      </div>
    </footer>
  );
}

export default function App() {
  return (
    <div className={`flex h-screen flex-col overflow-hidden bg-[#f0f0f0] ${UI}`}>
      <TitleBar />
      <MenuBar />
      <ToolRowOne />
      <ToolRowTwo />
      <main className="flex min-h-0 flex-1 border-t border-[#7c7c7c]">
        <div className="flex min-w-0 flex-1 border-r border-b border-[#777] bg-[#f0f0f0] pt-1 pr-[5px] pb-[7px] pl-[5px]">
          <div className="flex min-w-0 flex-1 border-t-2 border-l-2 border-[#6b6b6b]">
            <div className="relative min-w-0 flex-1 overflow-hidden bg-[#ababab]">
              <div className="w-[958px] shadow-[0_0_14px_6px_#3f3f3f]"><Schematic /></div>
              <Multimeter name="XMM1" value="2.344 uA" active="A" place="left-[330px] top-[24px]" />
              <Multimeter name="XMM2" value="249.426 mV" active="V" place="left-[687px] top-[30px]" />
            </div>
            <ScrollBar />
          </div>
        </div>
        <Palette />
      </main>
      <SheetTabs />
      <TaskBar />
    </div>
  );
}
